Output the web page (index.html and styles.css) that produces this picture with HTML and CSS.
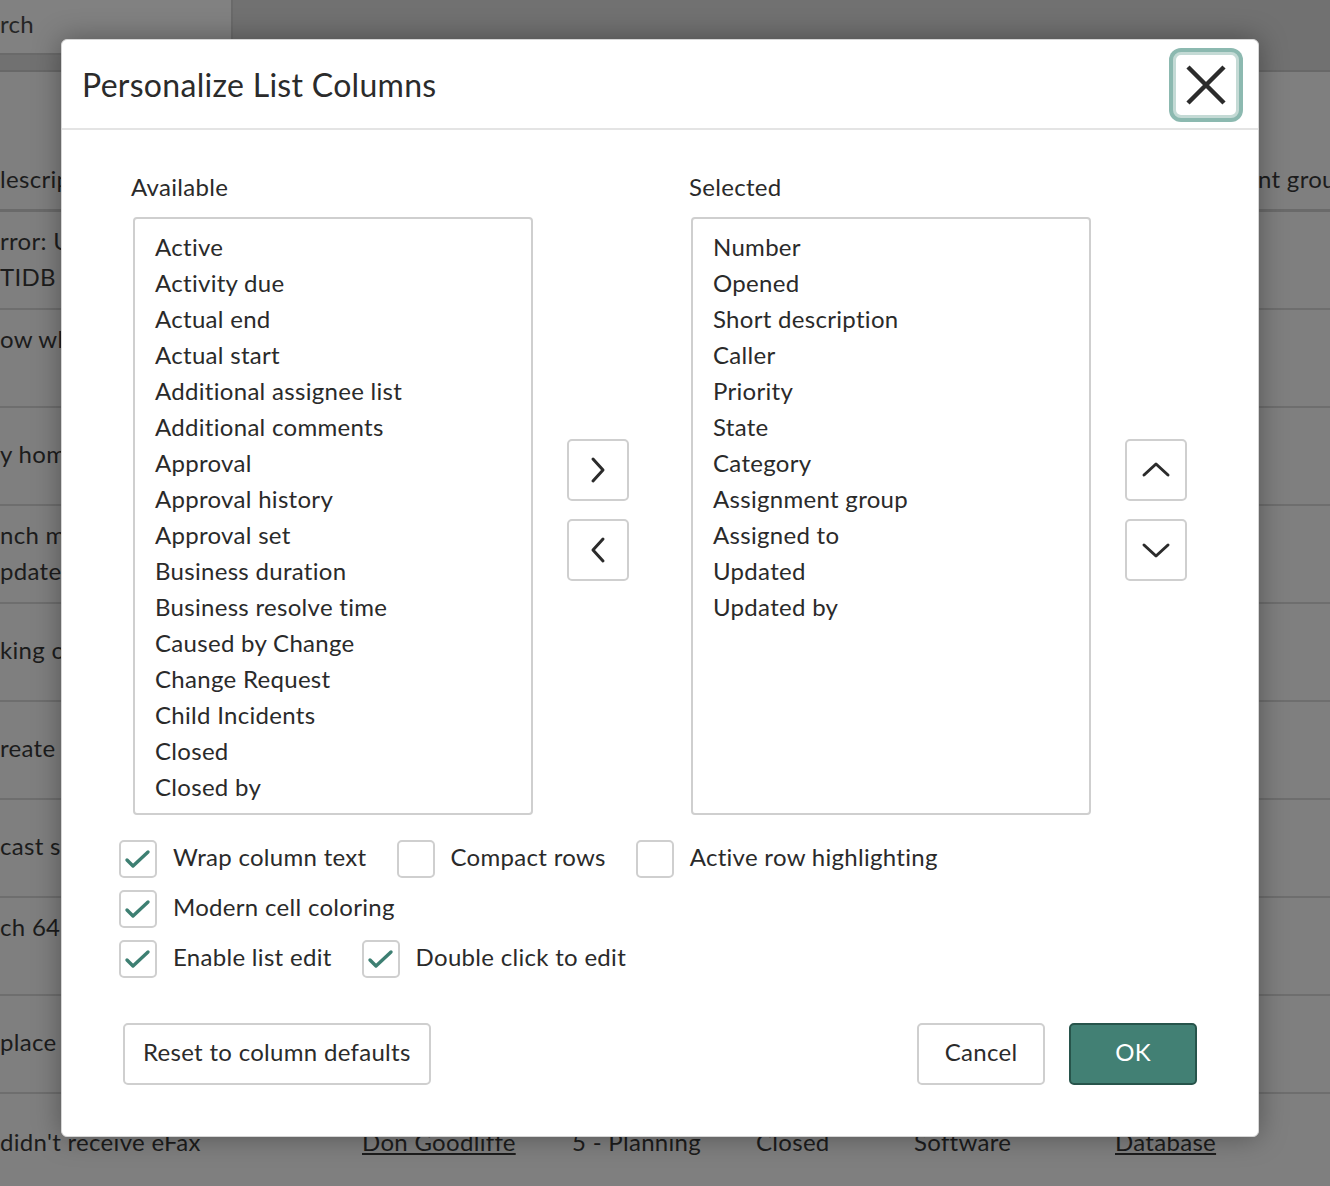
FILE: index.html
```html
<!DOCTYPE html>
<html lang="en">
<head>
<meta charset="utf-8">
<title>Personalize List Columns</title>
<link rel="stylesheet" href="styles.css">
</head>
<body>
<div class="page">
  <div class="topbar">
    <div class="search">rch</div>
  </div>
  <div class="thead">
    <span class="hcell">lescription</span>
    <span class="hcell right">nt grou</span>
  </div>
  <div class="row top"><div class="cell">rror: Unable<br>TIDB</div></div>
  <div class="row top"><div class="cell">ow when</div></div>
  <div class="row mid"><div class="cell">y home</div></div>
  <div class="row top"><div class="cell">nch mail<br>pdate</div></div>
  <div class="row mid"><div class="cell">king on</div></div>
  <div class="row mid"><div class="cell">reate</div></div>
  <div class="row mid"><div class="cell">cast spot</div></div>
  <div class="row top"><div class="cell">ch 64-bit</div></div>
  <div class="row mid"><div class="cell">place</div></div>
  <div class="row mid last">
    <div class="cell c1">didn't receive eFax</div>
    <div class="cell c2 link">Don Goodliffe</div>
    <div class="cell c3">5 - Planning</div>
    <div class="cell c4">Closed</div>
    <div class="cell c5">Software</div>
    <div class="cell c6 link">Database</div>
  </div>
</div>

<div class="modal" role="dialog" aria-label="Personalize List Columns">
  <div class="modal-header">
    <h1 class="modal-title">Personalize List Columns</h1>
    <button class="close-btn" aria-label="Close">
      <svg width="40" height="40" viewBox="0 0 40 40"><path d="M2 2 L38 38 M38 2 L2 38" stroke="#2b2b2b" stroke-width="4.5" fill="none"/></svg>
    </button>
  </div>
  <div class="modal-body">
    <div class="lists">
      <div class="list-col">
        <div class="list-label">Available</div>
        <ul class="listbox">
          <li>Active</li>
          <li>Activity due</li>
          <li>Actual end</li>
          <li>Actual start</li>
          <li>Additional assignee list</li>
          <li>Additional comments</li>
          <li>Approval</li>
          <li>Approval history</li>
          <li>Approval set</li>
          <li>Business duration</li>
          <li>Business resolve time</li>
          <li>Caused by Change</li>
          <li>Change Request</li>
          <li>Child Incidents</li>
          <li>Closed</li>
          <li>Closed by</li>
          <li>Comments and Work notes</li>
        </ul>
      </div>
      <div class="btn-col">
        <button class="icon-btn" aria-label="Add">
          <svg width="20" height="30" viewBox="0 0 20 30"><path d="M5 4 L15 15 L5 26" stroke="#2b2b2b" stroke-width="3" fill="none" stroke-linecap="round" stroke-linejoin="round"/></svg>
        </button>
        <button class="icon-btn" aria-label="Remove">
          <svg width="20" height="30" viewBox="0 0 20 30"><path d="M15 4 L5 15 L15 26" stroke="#2b2b2b" stroke-width="3" fill="none" stroke-linecap="round" stroke-linejoin="round"/></svg>
        </button>
      </div>
      <div class="list-col">
        <div class="list-label">Selected</div>
        <ul class="listbox">
          <li>Number</li>
          <li>Opened</li>
          <li>Short description</li>
          <li>Caller</li>
          <li>Priority</li>
          <li>State</li>
          <li>Category</li>
          <li>Assignment group</li>
          <li>Assigned to</li>
          <li>Updated</li>
          <li>Updated by</li>
        </ul>
      </div>
      <div class="btn-col">
        <button class="icon-btn" aria-label="Move up">
          <svg width="30" height="20" viewBox="0 0 30 20"><path d="M3 15 L15 4 L27 15" stroke="#2b2b2b" stroke-width="3" fill="none" stroke-linecap="round" stroke-linejoin="round"/></svg>
        </button>
        <button class="icon-btn" aria-label="Move down">
          <svg width="30" height="20" viewBox="0 0 30 20"><path d="M3 5 L15 16 L27 5" stroke="#2b2b2b" stroke-width="3" fill="none" stroke-linecap="round" stroke-linejoin="round"/></svg>
        </button>
      </div>
    </div>

    <div class="options">
      <div class="opt-row">
        <label class="opt"><span class="cb checked"><svg width="34" height="34" viewBox="0 0 34 34"><path d="M6 18 L12 24 L27 10" stroke="#3d7f72" stroke-width="3.4" fill="none" stroke-linecap="round" stroke-linejoin="round"/></svg></span><span class="opt-text">Wrap column text</span></label>
        <label class="opt"><span class="cb"></span><span class="opt-text">Compact rows</span></label>
        <label class="opt"><span class="cb"></span><span class="opt-text">Active row highlighting</span></label>
      </div>
      <div class="opt-row">
        <label class="opt"><span class="cb checked"><svg width="34" height="34" viewBox="0 0 34 34"><path d="M6 18 L12 24 L27 10" stroke="#3d7f72" stroke-width="3.4" fill="none" stroke-linecap="round" stroke-linejoin="round"/></svg></span><span class="opt-text">Modern cell coloring</span></label>
      </div>
      <div class="opt-row">
        <label class="opt"><span class="cb checked"><svg width="34" height="34" viewBox="0 0 34 34"><path d="M6 18 L12 24 L27 10" stroke="#3d7f72" stroke-width="3.4" fill="none" stroke-linecap="round" stroke-linejoin="round"/></svg></span><span class="opt-text">Enable list edit</span></label>
        <label class="opt"><span class="cb checked"><svg width="34" height="34" viewBox="0 0 34 34"><path d="M6 18 L12 24 L27 10" stroke="#3d7f72" stroke-width="3.4" fill="none" stroke-linecap="round" stroke-linejoin="round"/></svg></span><span class="opt-text">Double click to edit</span></label>
      </div>
    </div>

    <div class="footer">
      <button class="btn">Reset to column defaults</button>
      <div class="footer-right">
        <button class="btn cancel">Cancel</button>
        <button class="btn primary">OK</button>
      </div>
    </div>
  </div>
</div>
</body>
</html>
```

FILE: styles.css
```css
* { box-sizing: border-box; }

html, body {
  margin: 0;
  padding: 0;
}

body {
  width: 1330px;
  height: 1186px;
  overflow: hidden;
  position: relative;
  background: #7f7f7f;
  font-family: "Lato", "Liberation Sans", sans-serif;
  color: #2a2a2a;
}

/* ---------- dimmed background page ---------- */
.page {
  width: 1330px;
  font-size: 24px;
  letter-spacing: 0.3px;
  color: #1c1c1c;
}

.topbar {
  height: 72px;
  background: #717171;
  border-bottom: 2px solid #686868;
}

.search {
  width: 233px;
  height: 55px;
  background: #818181;
  border-right: 2px solid #6a6a6a;
  border-bottom: 2px solid #6a6a6a;
  line-height: 48px;
  color: #262626;
}

.thead {
  height: 140px;
  display: flex;
  align-items: flex-end;
  padding-bottom: 15px;
  border-bottom: 3px solid #6a6a6a;
}

.hcell { line-height: 30px; white-space: nowrap; }
.hcell.right { margin-left: auto; width: 72px; }

.row {
  height: 98px;
  border-bottom: 2px solid #6e6e6e;
  display: flex;
  line-height: 36px;
}

.row.top { padding-top: 11px; }
.row.mid { align-items: center; padding-bottom: 4px; }
.row.last { border-bottom: none; padding-top: 0; padding-bottom: 2px; }

.cell { white-space: nowrap; }
.c1 { width: 362px; }
.c2 { width: 210px; }
.c3 { width: 184px; }
.c4 { width: 158px; }
.c5 { width: 201px; }
.c6 { width: 200px; }
.link { text-decoration: underline; }

/* ---------- modal ---------- */
.modal {
  position: absolute;
  left: 61px;
  top: 39px;
  width: 1198px;
  height: 1098px;
  background: #ffffff;
  border-radius: 6px;
  box-shadow: 0 0 28px rgba(0, 0, 0, 0.35);
  border: 1px solid #d6d6d6;
  letter-spacing: 0.3px;
}

.modal-header {
  height: 90px;
  border-bottom: 2px solid #e4e4e4;
  display: flex;
  align-items: center;
  justify-content: space-between;
  padding: 0 17px 0 20px;
}

.modal-title {
  margin: 0;
  font-size: 32px;
  font-weight: 400;
  color: #2b2b2b;
}

.close-btn {
  width: 66px;
  height: 66px;
  border-radius: 8px;
  background: #fff;
  border: 3px solid #c4dad5;
  box-shadow: 0 0 0 4px #8cb9b0;
  display: flex;
  align-items: center;
  justify-content: center;
  padding: 0;
  margin-top: 2px;
  margin-right: 2px;
}

.modal-body {
  padding: 43px 0 0 0;
}

.lists {
  display: flex;
  padding-left: 71px;
}

.list-col {
  width: 400px;
  display: flex;
  flex-direction: column;
}

.list-label {
  font-size: 24px;
  line-height: 30px;
  margin-left: -2px;
  margin-bottom: 14px;
  margin-top: -1px;
  padding-bottom: 1px;
  color: #2a2a2a;
}

.listbox {
  list-style: none;
  margin: 0;
  height: 598px;
  border: 2px solid #cfcfcf;
  border-radius: 4px;
  padding: 10px 0 0 20px;
  overflow: hidden;
  font-size: 24px;
  line-height: 36px;
  color: #2a2a2a;
}

.listbox li { white-space: nowrap; }

.btn-col {
  display: flex;
  flex-direction: column;
  gap: 18px;
  margin: 266px 62px 0 34px;
}

.btn-col:last-child { margin-right: 0; }

.icon-btn {
  width: 62px;
  height: 62px;
  border: 2px solid #cfcfcf;
  border-radius: 5px;
  background: #fff;
  display: flex;
  align-items: center;
  justify-content: center;
  padding: 0;
}

.options {
  padding: 25px 0 0 57px;
  display: flex;
  flex-direction: column;
  gap: 12px;
}

.opt-row {
  display: flex;
  gap: 30px;
  height: 38px;
}

.opt {
  display: flex;
  align-items: center;
  gap: 16px;
  font-size: 24px;
  color: #2a2a2a;
  white-space: nowrap;
}

.opt-text {
  line-height: 30px;
  padding-bottom: 4px;
}

.cb {
  width: 38px;
  height: 38px;
  border: 2px solid #cfcfcf;
  border-radius: 5px;
  display: flex;
  align-items: center;
  justify-content: center;
  flex-shrink: 0;
}

.footer {
  display: flex;
  justify-content: space-between;
  padding: 45px 61px 0 61px;
}

.footer-right {
  display: flex;
  gap: 24px;
}

.btn {
  height: 62px;
  border: 2px solid #cfcfcf;
  border-radius: 5px;
  background: #fff;
  font-family: "Lato", "Liberation Sans", sans-serif;
  font-size: 24px;
  letter-spacing: 0.3px;
  color: #2b2b2b;
  padding: 0 18px 5px 18px;
}

.btn.cancel, .btn.primary { width: 128px; padding: 0 0 5px 0; }

.btn.primary {
  background: #428074;
  border-color: #27544b;
  color: #ffffff;
}
```
